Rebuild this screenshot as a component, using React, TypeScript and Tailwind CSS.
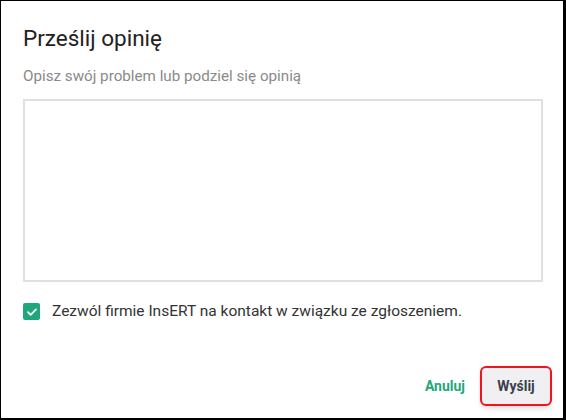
import React from "react";

const App: React.FC = () => {
  return (
    <div
      className="w-[566px] h-[420px] bg-white border-l border-t border-r-[3px] border-b-2 border-black flex flex-col"
      style={{ fontFamily: "Roboto, 'Liberation Sans', sans-serif" }}
    >
      <div className="flex flex-col pl-[22px] pr-[20px] pt-[22px]">
        <h2 className="text-[22.5px] leading-[30px] text-[#222] font-normal">Prześlij opinię</h2>
        <p className="mt-[13px] text-[15.2px] leading-[20px] text-[#8a8a8a]">
          Opisz swój problem lub podziel się opinią
        </p>

        {/* Pole tekstowe */}
        <textarea className="mt-[13px] h-[183px] w-[520px] border-2 border-[#e0e0e0] resize-none outline-none" />

        <label className="mt-[18px] flex items-center gap-[12px]">
          <span className="w-[17px] h-[17px] rounded-[2px] bg-[#1fa67a] flex items-center justify-center">
            <svg width="12" height="12" viewBox="0 0 12 12" fill="none">
              <path d="M2 6.2l2.6 2.6L10 3.4" stroke="white" strokeWidth="1.8" strokeLinecap="round" strokeLinejoin="round" />
            </svg>
          </span>
          <span className="text-[15.5px] text-[#333]">
            Zezwól firmie InsERT na kontakt w związku ze zgłoszeniem.
          </span>
        </label>
      </div>

      <div className="mt-auto mb-[12px] flex items-center justify-end gap-[13px] pr-[11px]">
        <button className="text-[14px] font-bold text-[#1fa67a] px-[2px]">Anuluj</button>
        <button className="w-[72px] h-[40px] rounded-[6px] border-2 border-[#f0141e] bg-[#f0f0f3] shadow-md text-[14px] font-bold text-[#3a3f4a]">
          Wyślij
        </button>
      </div>
    </div>
  );
};

export default App;
